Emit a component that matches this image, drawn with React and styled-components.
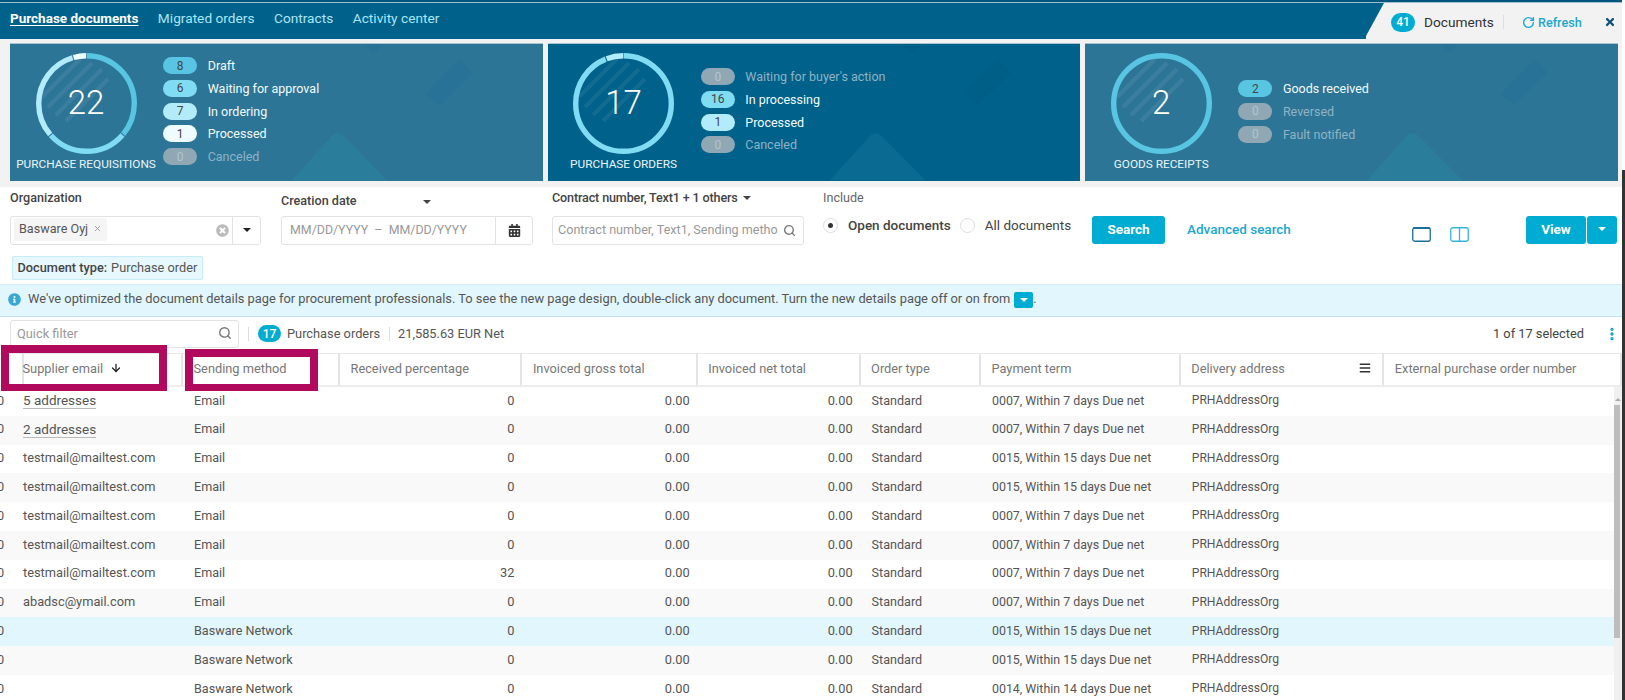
import React from 'react';
import styled, { createGlobalStyle } from 'styled-components';
import { Search, RotateCw, X, ArrowDown, EllipsisVertical } from 'lucide-react';
import { FaBars, FaCalendarAlt, FaInfoCircle, FaTimes, FaTimesCircle } from 'react-icons/fa';

const GlobalStyle = createGlobalStyle`
    html, body {
        margin: 0;
        padding: 0;
        width: 1625px;
        height: 700px;
        overflow: hidden;
        background: #fff;
    }
    * {
        box-sizing: border-box;
    }
    body {
        font-family: 'Roboto', 'Open Sans', sans-serif;
        font-size: 12.8px;
        color: #555;
    }
`

const Page = styled.div`
    width: 1622px;
    height: 700px;
    overflow: hidden;
    background: #fff;
`
const TopBar = styled.div`
    height: 39px;
    display: flex;
    justify-content: space-between;
    background: #00618a;
    border-top: 2px solid #00567c;
    box-shadow: inset 0 1px 0 #9cc0cf;
`
const NavLinks = styled.nav`
    display: flex;
    gap: 19.5px;
    padding: 8px 0 0 10px;
`
const NavLink = styled.a`
    font-size: ${props => props.$active ? 13.5 : 13.7}px;
    font-weight: ${props => props.$active ? 700 : 400};
    color: ${props => props.$active ? '#fff' : '#a9e6f7'};
    text-decoration: ${props => props.$active ? 'underline' : 'none'};
    text-underline-offset: 2px;
`
const StatusTab = styled.div`
    width: 256px;
    margin-top: 1px;
    padding: 2px 0 0 25px;
    display: flex;
    align-items: center;
    background: #f2f2f2;
    clip-path: polygon(18px 0, 100% 0, 100% 100%, 0 100%, 0 33px);
    color: #333;
    font-size: 13.7px;
`
const CountBadge = styled.span`
    width: ${props => props.$small ? 23 : 24}px;
    height: ${props => props.$small ? 17 : 19}px;
    border-radius: 10px;
    display: inline-flex;
    align-items: center;
    justify-content: center;
    background: #00acd1;
    color: #fff;
    font-size: 12px;
    font-weight: 500;
`
const TabLabel = styled.span`
    margin-left: 9px;
    width: 79px;
`
const OrdersLabel = styled.span`
    margin-left: 6px;
`
const Divider = styled.span`
    width: 1px;
    height: 14px;
    background: #ddd;
    margin: ${props => props.$margin || '0'};
`
const RefreshLink = styled.a`
    display: flex;
    align-items: center;
    gap: 3px;
    margin-left: 18px;
    color: #1ba8cf;
    font-size: 12.6px;
    font-weight: 500;
`
const CloseBtn = styled.span`
    display: flex;
    margin-left: 22px;
    color: #0d5577;
`

const Summary = styled.div`
    display: grid;
    grid-template-columns: repeat(3, 532.6px);
    gap: 5px;
    padding: 4px 0 6px 10px;
    background: #f2f2f2;
`
const Card = styled.section`
    position: relative;
    height: 137.5px;
    display: flex;
    overflow: hidden;
    background: ${props => props.$dark ? '#00618a' : '#2d7596'};
    border-top: 1px solid #a9c4d0;
`
const CardDeco = styled.svg`
    position: absolute;
    inset: 0;
    width: 100%;
    height: 100%;
`
const Gauge = styled.div`
    position: relative;
    width: 152px;
    flex: none;
    display: flex;
    flex-direction: column;
    align-items: center;
    padding-top: 9px;
`
const RingWrap = styled.div`
    position: relative;
    width: 101px;
    height: 101px;
`
const RingValue = styled.span`
    position: absolute;
    inset: 0;
    padding-bottom: 2px;
    display: flex;
    align-items: center;
    justify-content: center;
    color: #fff;
    font-size: 33px;
    font-weight: 300;
`
const GaugeTitle = styled.div`
    margin-top: 3px;
    color: #e8f6fa;
    font-size: 11.8px;
    white-space: nowrap;
`
const StatusList = styled.div`
    position: relative;
    display: flex;
    flex-direction: column;
    gap: 5.8px;
    padding-top: ${props => props.$top}px;
    margin-left: 1.2px;
`
const StatusRow = styled.div`
    display: flex;
    align-items: center;
    gap: 10.5px;
    height: 17px;
    font-size: 12.5px;
    color: ${props => props.$off ? '#8fb3c4' : '#f2fbfd'};
`
const Pill = styled.span`
    width: 34px;
    height: 17px;
    border-radius: 9px;
    display: flex;
    align-items: center;
    justify-content: center;
    font-size: 12px;
    background: ${props => props.$bg};
    color: ${props => props.$off ? '#b4c6ce' : '#444'};
`

const Filters = styled.div`
    display: flex;
    height: 69px;
    padding-left: 10px;
`
const Field = styled.div`
    width: ${props => props.$width}px;
    flex: none;
    margin-right: ${props => props.$gap}px;
`
const FieldLabel = styled.div`
    height: 29px;
    padding-top: ${props => props.$down ? 6 : 3}px;
    display: flex;
    align-items: flex-start;
    color: ${props => props.$light ? '#666' : '#444'};
    font-weight: ${props => props.$light ? 400 : 500};
    font-size: 12.6px;
    letter-spacing: ${props => props.$tight ? '-0.15px' : '0'};
    white-space: nowrap;
`
const Caret = styled.span`
    width: 0;
    height: 0;
    margin: ${props => props.$margin || '6px 0 0 5px'};
    border-left: 4px solid transparent;
    border-right: 4px solid transparent;
    border-top: 4px solid ${props => props.$color || '#444'};
`
const InputBox = styled.div`
    height: 29px;
    display: flex;
    align-items: center;
    border: 1px solid #e2e2e2;
    border-radius: 3px;
    background: #fff;
    color: #999;
`
const TagChip = styled.span`
    display: flex;
    align-items: center;
    gap: 5px;
    height: 23px;
    margin-left: 3px;
    padding: 0 5px 2px;
    border-radius: 3px;
    background: #f5f5f5;
    color: #555;
    font-size: 12.6px;
`
const Grow = styled.span`
    flex: 1;
    display: flex;
    align-items: center;
    height: 100%;
    padding: 0 0 2px ${props => props.$pad || 0}px;
    font-size: ${props => props.$size || 12.8}px;
    white-space: nowrap;
    overflow: hidden;
`
const InputAddon = styled.span`
    width: ${props => props.$width}px;
    height: 100%;
    flex: none;
    display: flex;
    align-items: center;
    justify-content: center;
    border-left: 1px solid #e2e2e2;
    color: #333;
`
const ClearIcon = styled(FaTimesCircle)`
    flex: none;
    margin-right: 3px;
    color: #bbb;
    font-size: 13px;
`
const FieldSearchIcon = styled(Search)`
    flex: none;
    margin: 0 7px 0 4px;
    color: #777;
`
const RadioGroup = styled.div`
    display: flex;
    align-items: center;
    height: 21px;
    margin-top: -1px;
`
const Radio = styled.span`
    width: 15px;
    height: 15px;
    flex: none;
    border-radius: 50%;
    border: 1px solid #ddd;
    display: flex;
    align-items: center;
    justify-content: center;
    margin-right: ${props => props.$gap}px;
    &::after {
        content: '';
        width: 5px;
        height: 5px;
        border-radius: 50%;
        background: ${props => props.$on ? '#333' : 'transparent'};
    }
`
const RadioText = styled.span`
    color: #444;
    font-weight: ${props => props.$on ? 500 : 400};
    margin-right: ${props => props.$gap || 0}px;
    font-size: 13.5px;
`
const Button = styled.button`
    height: 28px;
    border: none;
    border-radius: 3px;
    padding: 0 0 2px;
    width: ${props => props.$width}px;
    background: #00acd1;
    color: #fff;
    font: 700 13.5px 'Roboto', sans-serif;
`
const SearchBlock = styled.div`
    display: flex;
    align-items: center;
    height: 28px;
    margin-top: 29.5px;
`
const AdvancedLink = styled.a`
    margin-left: 22px;
    padding-bottom: 3px;
    width: 225px;
    color: #1ba8cf;
    font-weight: 500;
    font-size: 13.5px;
    white-space: nowrap;
`
const LayoutIcons = styled.div`
    display: flex;
    gap: 19px;
    margin-top: 9px;
`
const SplitButton = styled.div`
    display: flex;
    margin-left: 57px;
    gap: 1px;
`
const SplitCaret = styled(Button)`
    display: flex;
    align-items: center;
    justify-content: center;
`

const TagRow = styled.div`
    height: 28px;
    padding: 0 0 0 11.5px;
`
const TypeTag = styled.span`
    display: inline-flex;
    align-items: center;
    height: 24px;
    padding: 0 5px 1px;
    border: 1px solid #c6ecf8;
    border-radius: 2px;
    background: #e6f7fd;
    color: #555;
    font-size: 12.75px;
    b {
        font-weight: 500;
        color: #444;
        margin-right: 4px;
    }
`
const Banner = styled.div`
    height: 33.5px;
    display: flex;
    align-items: center;
    padding: 0 0 1px 8px;
    gap: 7px;
    background: #e2f6fd;
    border-top: 1px solid #d5edf5;
    border-bottom: 1px solid #c3e0ec;
    color: #555;
    font-size: 12.85px;
`
const BannerIcon = styled(FaInfoCircle)`
    flex: none;
    color: #3aa7d4;
    font-size: 13px;
`
const InlineCaretBtn = styled.span`
    width: 19px;
    height: 16px;
    margin-left: 4px;
    border-radius: 2px;
    background: #00acd1;
    display: inline-flex;
    align-items: center;
    justify-content: center;
    vertical-align: middle;
`
const Toolbar = styled.div`
    height: 35.5px;
    display: flex;
    align-items: center;
    padding: 0 0 2px 10px;
    color: #555;
`
const QuickFilter = styled(InputBox)`
    width: 229px;
    height: 28.5px;
    padding: 0 6px 1px;
    justify-content: space-between;
    flex: none;
    border-radius: 3px;
`
const Selected = styled.span`
    margin-left: auto;
    color: #444;
`
const KebabBtn = styled.span`
    display: flex;
    margin: 0 0 0 20px;
    width: 18px;
    color: #0f9fc4;
`

const COLUMNS = '12px 171px 157px 182.4px 175.3px 162.9px 120.4px 199.8px 203.5px 1fr';

const HeadRow = styled.div`
    position: relative;
    display: grid;
    grid-template-columns: ${COLUMNS};
    height: 34.5px;
    border-top: 1px solid #e8e8e8;
    border-bottom: 2px solid #ececec;
`
const HeadCell = styled.div`
    display: flex;
    align-items: center;
    justify-content: space-between;
    padding: 0 11px 2px 10.5px;
    color: #777;
    font-size: 12.8px;
    border-right: 2px solid #e4e4e4;
    &:last-child {
        border-right: none;
    }
`
const HeadLabel = styled.span`
    display: flex;
    align-items: center;
    gap: 7px;
`
const HeadMenuIcon = styled(FaBars)`
    color: #333;
    font-size: 12px;
`
const Marker = styled.div`
    position: absolute;
    left: ${props => props.$left}px;
    top: ${props => props.$top}px;
    width: ${props => props.$width}px;
    height: ${props => props.$height}px;
    border: 8px solid #b0095e;
    border-bottom-width: 7px;
`
const TableBody = styled.div`
    display: flex;
    height: 314px;
`
const Rows = styled.div`
    width: 1614px;
    flex: none;
`
const Row = styled.div`
    display: grid;
    grid-template-columns: ${COLUMNS};
    height: 28.8px;
    padding-bottom: 2.5px;
    align-items: center;
    background: ${props => props.$selected ? '#e2f6fd' : props.$alt ? '#f9f9f9' : '#fff'};
`
const Cell = styled.div`
    padding: 0 ${props => props.$right ? 8 : 11}px 0 ${props => props.$right ? 0 : 11}px;
    text-align: ${props => props.$right ? 'right' : 'left'};
    font-size: ${props => props.$size || 12.8}px;
    white-space: nowrap;
    color: #555;
`
const StubCell = styled.div`
    margin-left: -3px;
    color: #555;
`
const AddressLink = styled.span`
    border-bottom: 1px solid #bbb;
    font-size: 13.5px;
`
const Scrollbar = styled.div`
    width: 8px;
    margin-left: auto;
    padding-top: 11px;
    background: #f0f0f0;
    flex: none;
`
const ScrollArrow = styled.div`
    width: 0;
    height: 0;
    margin: 0 0 4px 1px;
    border-left: 3px solid transparent;
    border-right: 3px solid transparent;
    border-bottom: 3px solid #aaa;
`
const ScrollThumb = styled.div`
    height: 233px;
    width: 6px;
    background: #bdbdbd;
`
const EdgeLine = styled.div`
    position: fixed;
    right: 0;
    top: 170px;
    bottom: 0;
    width: 3px;
    background: #333;
`

const cards = [
    {
        title: 'PURCHASE REQUISITIONS', total: 22, top: 13,
        items: [
            { n: 8, label: 'Draft', color: '#58c6e3' },
            { n: 6, label: 'Waiting for approval', color: '#7fdcf3' },
            { n: 7, label: 'In ordering', color: '#b2ecfb' },
            { n: 1, label: 'Processed', color: '#eefbff' },
            { n: 0, label: 'Canceled' },
        ],
    },
    {
        title: 'PURCHASE ORDERS', total: 17, top: 24, dark: true,
        items: [
            { n: 0, label: "Waiting for buyer's action" },
            { n: 16, label: 'In processing', color: '#7fdcf3' },
            { n: 1, label: 'Processed', color: '#b2ecfb' },
            { n: 0, label: 'Canceled' },
        ],
    },
    {
        title: 'GOODS RECEIPTS', total: 2, top: 36,
        items: [
            { n: 2, label: 'Goods received', color: '#58c6e3' },
            { n: 0, label: 'Reversed' },
            { n: 0, label: 'Fault notified' },
        ],
    },
];

const headers = ['Supplier email', 'Sending method', 'Received percentage', 'Invoiced gross total', 'Invoiced net total', 'Order type', 'Payment term', 'Delivery address', 'External purchase order number'];

const T7 = '0007, Within 7 days Due net';
const T15 = '0015, Within 15 days Due net';
const T14 = '0014, Within 14 days Due net';
const MAIL = 'testmail@mailtest.com';

const rows = [
    { email: '5 addresses', link: true, method: 'Email', pct: 0, term: T7 },
    { email: '2 addresses', link: true, method: 'Email', pct: 0, term: T7 },
    { email: MAIL, method: 'Email', pct: 0, term: T15 },
    { email: MAIL, method: 'Email', pct: 0, term: T15 },
    { email: MAIL, method: 'Email', pct: 0, term: T7 },
    { email: MAIL, method: 'Email', pct: 0, term: T7 },
    { email: MAIL, method: 'Email', pct: 32, term: T7 },
    { email: 'abadsc@ymail.com', method: 'Email', pct: 0, term: T7 },
    { email: '', method: 'Basware Network', pct: 0, term: T15, selected: true },
    { email: '', method: 'Basware Network', pct: 0, term: T15 },
    { email: '', method: 'Basware Network', pct: 0, term: T14 },
];

const Ring = ({ total, items }) => {
    const r = 47.8;
    const len = 2 * Math.PI * r;
    let done = 0;
    const parts = items.filter(item => item.n > 0);
    return (
        <svg width="101" height="101" viewBox="0 0 101 101">
            <g stroke="#fff" strokeOpacity="0.07" strokeWidth="4">
                <path d="M6 44 L44 6" />
                <path d="M12 54 L56 10" />
                <path d="M20 62 L66 16" />
                <path d="M30 68 L72 26" />
            </g>
            {parts.map(item => {
                const piece = (item.n / total) * len;
                const offset = (done / total) * len;
                done += item.n;
                const gap = parts.length > 1 ? 1 : 0;
                return (
                    <circle key={item.label} cx="50.5" cy="50.5" r={r} fill="none" stroke={item.color} strokeWidth="5.4"
                        strokeDasharray={`${piece - gap} ${len - piece + gap}`} strokeDashoffset={-offset}
                        transform="rotate(-90 50.5 50.5)" />
                );
            })}
        </svg>
    );
};

const Deco = ({ dark }) => (
    <CardDeco viewBox="0 0 533 138" preserveAspectRatio="none">
        <path d="M282 138 L322 93 Q328 87 334 93 L378 138 Z" fill={dark ? '#0b6a91' : '#2b7d9c'} />
        <path d="M450 15 L463 29 L430 62 L416 50 Z" fill={dark ? '#005f87' : '#287298'} />
        <path d="M355 0 L372 0 L367 8 L362 8 Z" fill={dark ? '#005f87' : '#287298'} />
    </CardDeco>
);

const SummaryCard = ({ card }) => (
    <Card $dark={card.dark}>
        <Deco dark={card.dark} />
        <Gauge>
            <RingWrap>
                <Ring total={card.total} items={card.items} />
                <RingValue>{card.total}</RingValue>
            </RingWrap>
            <GaugeTitle>{card.title}</GaugeTitle>
        </Gauge>
        <StatusList $top={card.top}>
            {card.items.map(item => (
                <StatusRow key={item.label} $off={item.n === 0}>
                    <Pill $bg={item.color || '#8fa8b4'} $off={item.n === 0}>{item.n}</Pill>
                    {item.label}
                </StatusRow>
            ))}
        </StatusList>
    </Card>
);

const LayoutIcon = ({ split }) => (
    <svg width="19" height="15" viewBox="0 0 19 15" fill="none">
        <rect x="0.75" y="0.75" width="17.5" height="13.5" rx="2" stroke={split ? '#35b5d8' : '#1a6f96'} strokeWidth="1.3" />
        {split
            ? <path d="M9.5 1 V14" stroke="#35b5d8" strokeWidth="1.3" />
            : <path d="M1 1.2 H18" stroke="#1a6f96" strokeWidth="1.6" />}
    </svg>
);

const App = () => {
    return (
        <>
            <GlobalStyle />
            <Page>
                <TopBar>
                    <NavLinks>
                        <NavLink $active>Purchase documents</NavLink>
                        <NavLink>Migrated orders</NavLink>
                        <NavLink>Contracts</NavLink>
                        <NavLink>Activity center</NavLink>
                    </NavLinks>
                    <StatusTab>
                        <CountBadge>41</CountBadge>
                        <TabLabel>Documents</TabLabel>
                        <Divider />
                        <RefreshLink><RotateCw size={13} strokeWidth={2.6} />Refresh</RefreshLink>
                        <CloseBtn><FaTimes size={12} /></CloseBtn>
                    </StatusTab>
                </TopBar>

                <Summary>
                    {cards.map(card => <SummaryCard key={card.title} card={card} />)}
                </Summary>

                <Filters>
                    <Field $width={251} $gap={20}>
                        <FieldLabel>Organization</FieldLabel>
                        <InputBox>
                            <Grow>
                                <TagChip>Basware Oyj <X size={9} color="#888" /></TagChip>
                            </Grow>
                            <ClearIcon />
                            <InputAddon $width={28}><Caret $margin="0" $color="#222" /></InputAddon>
                        </InputBox>
                    </Field>
                    <Field $width={252} $gap={19}>
                        <FieldLabel $down>Creation date<Caret $margin="7px 0 0 66px" /></FieldLabel>
                        <InputBox>
                            <Grow $pad={8} $size={12.4}>MM/DD/YYYY&nbsp; – &nbsp;MM/DD/YYYY</Grow>
                            <InputAddon $width={37}><FaCalendarAlt size={13} /></InputAddon>
                        </InputBox>
                    </Field>
                    <Field $width={252} $gap={19}>
                        <FieldLabel $tight>Contract number, Text1 + 1 others<Caret /></FieldLabel>
                        <InputBox>
                            <Grow $pad={5} $size={12.6}>Contract number, Text1, Sending metho</Grow>
                            <FieldSearchIcon size={13} strokeWidth={2.6} />
                        </InputBox>
                    </Field>
                    <Field $width={269} $gap={0}>
                        <FieldLabel $light>Include</FieldLabel>
                        <RadioGroup>
                            <Radio $on $gap={10} />
                            <RadioText $on $gap={9}>Open documents</RadioText>
                            <Radio $gap={10} />
                            <RadioText>All documents</RadioText>
                        </RadioGroup>
                    </Field>
                    <SearchBlock>
                        <Button $width={73}>Search</Button>
                        <AdvancedLink>Advanced search</AdvancedLink>
                        <LayoutIcons>
                            <LayoutIcon />
                            <LayoutIcon split />
                        </LayoutIcons>
                        <SplitButton>
                            <Button $width={60}>View</Button>
                            <SplitCaret $width={30}><Caret $margin="0" $color="#fff" /></SplitCaret>
                        </SplitButton>
                    </SearchBlock>
                </Filters>

                <TagRow>
                    <TypeTag><b>Document type:</b> Purchase order</TypeTag>
                </TagRow>

                <Banner>
                    <BannerIcon />
                    <span>
                        We've optimized the document details page for procurement professionals. To see the new page design, double-click any document. Turn the new details page off or on from
                        <InlineCaretBtn><Caret $margin="0" $color="#fff" /></InlineCaretBtn>.
                    </span>
                </Banner>

                <Toolbar>
                    <QuickFilter>
                        Quick filter
                        <Search size={14} color="#777" strokeWidth={2.4} />
                    </QuickFilter>
                    <Divider $margin="0 9px 0 9px" />
                    <CountBadge $small>17</CountBadge>
                    <OrdersLabel>Purchase orders</OrdersLabel>
                    <Divider $margin="0 8.5px" />
                    <span>21,585.63 EUR Net</span>
                    <Selected>1 of 17 selected</Selected>
                    <KebabBtn><EllipsisVertical size={16} strokeWidth={3} /></KebabBtn>
                </Toolbar>

                <HeadRow>
                    <HeadCell />
                    {headers.map((name, i) => (
                        <HeadCell key={name}>
                            <HeadLabel>
                                {name}
                                {i === 0 && <ArrowDown size={12} color="#222" strokeWidth={2.6} />}
                            </HeadLabel>
                            {name === 'Delivery address' && <HeadMenuIcon />}
                        </HeadCell>
                    ))}
                    <Marker $left={1} $top={-9} $width={166} $height={46} />
                    <Marker $left={185} $top={-5} $width={132.5} $height={42} />
                </HeadRow>

                <TableBody>
                    <Rows>
                        {rows.map((row, i) => (
                            <Row key={i} $alt={i % 2 === 1} $selected={row.selected}>
                                <StubCell>0</StubCell>
                                <Cell>{row.link ? <AddressLink>{row.email}</AddressLink> : row.email}</Cell>
                                <Cell $size={12.6}>{row.method}</Cell>
                                <Cell $right>{row.pct}</Cell>
                                <Cell $right>0.00</Cell>
                                <Cell $right>0.00</Cell>
                                <Cell $size={12.6}>Standard</Cell>
                                <Cell $size={12.4}>{row.term}</Cell>
                                <Cell $size={12.1}>PRHAddressOrg</Cell>
                                <Cell />
                            </Row>
                        ))}
                    </Rows>
                    <Scrollbar>
                        <ScrollArrow />
                        <ScrollThumb />
                    </Scrollbar>
                </TableBody>
            </Page>
            <EdgeLine />
        </>
    );
};

export default App;
